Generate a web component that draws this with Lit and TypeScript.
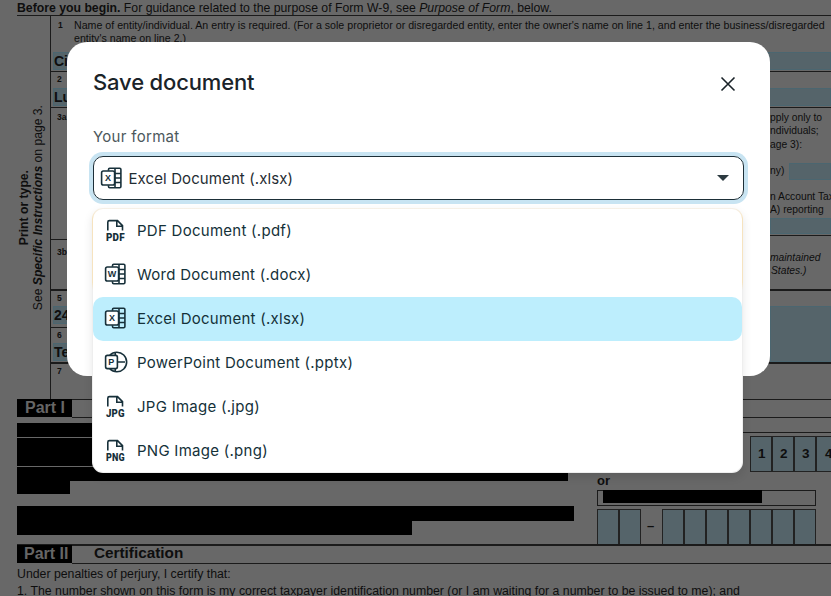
import { LitElement, html, css, svg } from "lit";
import { customElement } from "lit/decorators.js";
import { styleMap } from "lit/directives/style-map.js";

type Box = [number, number, number, number];

const INK = "#17303a";

const sheetIcon = (letter: string) => svg`
  <path d="M9.500 4.800V3.500c0-.7.5-1.200 1.200-1.200h10c.7 0 1.200.5 1.200 1.200v17c0 .7-.5 1.200-1.200 1.200h-10c-.7 0-1.200-.5-1.200-1.200v-1.300M16 2.500v19M15.500 7.500h6.400M15.500 12h6.400M15.500 16.500h6.400" fill="none" stroke="${INK}" stroke-width="1.600"/>
  <rect x="2.600" y="5" width="13" height="14" rx="1.800" fill="#fff" stroke="${INK}" stroke-width="1.600"/>
  <text x="9.100" y="15.300" text-anchor="middle" font-family="Liberation Sans, sans-serif" font-size="9" font-weight="700" fill="${INK}">${letter}</text>`;

const pptIcon = svg`
  <path d="M6.800 5.200A9.800 9.800 0 1 1 6.800 18.800M12.300 2.300v19.400M12.300 12h9.700" fill="none" stroke="${INK}" stroke-width="1.600"/>
  <rect x="2.600" y="5.400" width="11.800" height="13.200" rx="1.800" fill="#fff" stroke="${INK}" stroke-width="1.600"/>
  <text x="8.500" y="15.300" text-anchor="middle" font-family="Liberation Sans, sans-serif" font-size="9" font-weight="700" fill="${INK}">P</text>`;

const fileIcon = (label: string) => svg`
  <path d="M4.800 12.500V4.200c0-.9.700-1.600 1.600-1.600H14.500l5 5v4.900M13.800 2.600v5.700h5.700" fill="none" stroke="${INK}" stroke-width="1.600"/>
  <text x="12.400" y="22.800" text-anchor="middle" textLength="19" lengthAdjust="spacingAndGlyphs" font-family="Roboto, sans-serif" font-size="10.500" font-weight="900" fill="${INK}">${label}</text>`;

const icon = (g: unknown) => html`<svg class="ico" viewBox="0 0 24 24" aria-hidden="true">${g}</svg>`;

const OPTIONS = [
  { label: "PDF Document (.pdf)", g: fileIcon("PDF") },
  { label: "Word Document (.docx)", g: sheetIcon("W") },
  { label: "Excel Document (.xlsx)", g: sheetIcon("X"), active: true },
  { label: "PowerPoint Document (.pptx)", g: pptIcon },
  { label: "JPG Image (.jpg)", g: fileIcon("JPG") },
  { label: "PNG Image (.png)", g: fileIcon("PNG") },
];

// The scanned form behind the dialog: a free canvas of lines, fields and words.
const LINES: Box[] = [
  [17, 15, 814, 1], [50, 16, 1, 383], [50, 71, 781, 1], [50, 107, 781, 1], [50, 239, 20, 1], [770, 235, 61, 1],
  [50, 289, 781, 2], [50, 327, 20, 1], [50, 362, 781, 2], [72, 399, 759, 1], [72, 417, 759, 1],
  [17, 544, 814, 2], [72, 563, 759, 1], [597, 432, 234, 1], [597, 490, 219, 1], [597, 505, 219, 1],
  [597, 490, 1, 15], [815, 490, 1, 15],
];
const FIELDS: Box[] = [
  [53, 52, 778, 18], [53, 88, 778, 18], [789, 163, 42, 17], [770, 218, 61, 16], [53, 306, 20, 18],
  [770, 306, 61, 56], [53, 343, 20, 18],
];
const CELLS: Box[] = [
  [750, 436, 22, 36], [772, 436, 22, 36], [794, 436, 22, 36], [816, 436, 22, 36],
  [597, 509, 22, 36], [619, 509, 22, 36],
  [662, 509, 22, 36], [684, 509, 22, 36], [706, 509, 22, 36], [728, 509, 22, 36],
  [750, 509, 22, 36], [772, 509, 22, 36], [794, 509, 22, 36],
];
const BLACK: Box[] = [
  [17, 399, 55, 18], [17, 423, 551, 14], [17, 438, 551, 28], [17, 467, 551, 14], [17, 481, 53, 13],
  [17, 506, 557, 15], [17, 521, 395, 14], [603, 490, 159, 13], [17, 545, 55, 18], [560, 472, 8, 9], [560, 506, 14, 15],
];
type Word = { x: number; y: number; t: unknown; s?: number; cls?: string };
const WORDS: Word[] = [
  { x: 17, y: 1, s: 12.25, t: html`<b>Before you begin.</b> For guidance related to the purpose of Form W-9, see <i>Purpose of Form</i>, below.` },
  { x: 58, y: 20, s: 8.500, cls: "b", t: "1" },
  { x: 74, y: 19, s: 10.65, t: "Name of entity/individual. An entry is required. (For a sole proprietor or disregarded entity, enter the owner's name on line 1, and enter the business/disregarded" },
  { x: 74, y: 32, s: 10.65, t: "entity's name on line 2.)" },
  { x: 54, y: 53, s: 14, cls: "b", t: "Ci" },
  { x: 57, y: 74, s: 8.500, cls: "b", t: "2" },
  { x: 54, y: 89, s: 14, cls: "b", t: "Lu" },
  { x: 57, y: 112, s: 8.500, cls: "b", t: "3a" },
  { x: 57, y: 247, s: 8.500, cls: "b", t: "3b" },
  { x: 57, y: 293, s: 8.500, cls: "b", t: "5" },
  { x: 54, y: 307, s: 14, cls: "b", t: "24" },
  { x: 57, y: 330, s: 8.500, cls: "b", t: "6" },
  { x: 54, y: 344, s: 14, cls: "b", t: "Te" },
  { x: 57, y: 366, s: 8.500, cls: "b", t: "7" },
  { x: 770, y: 112, s: 10.3, t: "pply only to" },
  { x: 770, y: 125, s: 10.3, t: "ndividuals;" },
  { x: 770, y: 139, s: 10.3, t: "age 3):" },
  { x: 770, y: 165, s: 10.3, t: "ny)" },
  { x: 770, y: 191, s: 10.3, t: "n Account Tax" },
  { x: 770, y: 204, s: 10.3, t: "A) reporting" },
  { x: 770, y: 252, s: 10.3, cls: "i", t: "maintained" },
  { x: 771, y: 265, s: 10.3, cls: "i", t: "States.)" },
  { x: 25, y: 398, s: 16, cls: "part", t: "Part I" },
  { x: 24, y: 544, s: 16, cls: "part", t: "Part II" },
  { x: 94, y: 544, s: 15.3, cls: "b", t: "Certification" },
  { x: 597, y: 473, s: 13, cls: "b", t: "or" },
  { x: 647, y: 518, s: 13, cls: "b", t: "–" },
  { x: 758, y: 446, s: 13.5, cls: "b", t: "1" },
  { x: 780, y: 446, s: 13.5, cls: "b", t: "2" },
  { x: 802, y: 446, s: 13.5, cls: "b", t: "3" },
  { x: 825, y: 446, s: 13.5, cls: "b", t: "4" },
  { x: 17, y: 567, s: 12.3, t: "Under penalties of perjury, I certify that:" },
  { x: 17, y: 584, s: 12.3, t: "1. The number shown on this form is my correct taxpayer identification number (or I am waiting for a number to be issued to me); and" },
];

const boxStyle = ([left, top, width, height]: Box) =>
  styleMap({ left: `${left}px`, top: `${top}px`, width: `${width}px`, height: `${height}px` });

@customElement("app-root")
export class AppRoot extends LitElement {
  static styles = css`
    :host { display: block; width: 831px; height: 596px; position: relative; overflow: hidden;
      background: #686868; font-family: "Inter", sans-serif; }
    .form { position: absolute; inset: 0; font-family: "Liberation Sans", sans-serif; color: #0e0e0e; }
    .form > * { position: absolute; }
    .line { background: #1b1b1b; }
    .field { background: #55646a; box-shadow: inset 0 0 0 1px #4b6670; }
    .cell { background: #55646a; box-shadow: inset 0 0 0 1px #4b6670; outline: 1px solid #222; outline-offset: -1px; }
    .black { background: #000; }
    .word { white-space: nowrap; line-height: 1.2; }
    .word.b { font-weight: 700; }
    .word.i { font-style: italic; }
    .word.part { font-weight: 700; color: #666; }
    .side { writing-mode: vertical-rl; transform: rotate(180deg); white-space: nowrap; line-height: 1; }
    .side.one { left: 18px; top: 170px; font-size: 12.2px; font-weight: 700; }
    .side.two { left: 32px; top: 105px; font-size: 12.15px; }

    .dialog { position: absolute; left: 67px; top: 42px; width: 703px; height: 334px; box-sizing: border-box;
      background: #fff; border-radius: 20px; padding: 26px 26px 0; }
    .head { display: flex; align-items: center; justify-content: space-between; padding-right: 4.500px; }
    h2 { margin: 0; font-size: 22px; line-height: 28px; font-weight: 500; color: #1a2329; letter-spacing: -.15px; }
    .close { display: flex; background: none; border: 0; padding: 0; margin-top: 3px; color: #1a2329; }
    .close svg { width: 24px; height: 24px; }
    label { display: block; margin-top: 30px; font-size: 15px; letter-spacing: .3px; line-height: 22px; color: #4c585c; }
    .select { display: flex; align-items: center; gap: 5.500px; margin-top: 8px; height: 44px; width: 651px; box-sizing: border-box;
      padding: 0 14px 0 5px; border: 1.500px solid #1d2f38; border-radius: 10px; box-shadow: 0 0 0 4px #c8e4f2;
      font-size: 15px; letter-spacing: .1px; color: #1f2d33; }
    .select span { flex: 1; }
    .caret { width: 0; height: 0; border: 6px solid transparent; border-top: 6.500px solid #2c3a40; border-bottom: 0; }
    .ico { width: 24px; height: 24px; flex: none; overflow: visible; }
    .menu { position: absolute; left: 92px; top: 208px; width: 651px; height: 265px; box-sizing: border-box; padding: 1px;
      border-radius: 11px; background: linear-gradient(#f5f0e8 0, #f6e3bf 4%, #f6e3bf 28%, #eeeeee 31%, #eeeeee 100%);
      box-shadow: 0 4px 10px rgba(0,0,0,.1); }
    .list { height: 100%; background: #fff; border-radius: 10px; }
    .opt { display: flex; align-items: center; gap: 10px; height: 44px; box-sizing: border-box; padding: 0 0 2px 10px;
      border-radius: 10px; font-size: 15px; letter-spacing: .27px; color: #143139; }
    .opt.active { background: #bdeefd; }
  `;

  render() {
    return html`
      <div class="form">
        ${FIELDS.map((b) => html`<div class="field" style=${boxStyle(b)}></div>`)}
        ${CELLS.map((b) => html`<div class="cell" style=${boxStyle(b)}></div>`)}
        ${LINES.map((b) => html`<div class="line" style=${boxStyle(b)}></div>`)}
        ${BLACK.map((b) => html`<div class="black" style=${boxStyle(b)}></div>`)}
        ${WORDS.map((w) => html`<div class="word ${w.cls ?? ""}" style=${styleMap({ left: `${w.x}px`, top: `${w.y}px`, fontSize: `${w.s}px` })}>${w.t}</div>`)}
        <div class="side one">Print or type.</div>
        <div class="side two">See <b><i>Specific Instructions</i></b> on page 3.</div>
      </div>
      <section class="dialog">
        <div class="head">
          <h2>Save document</h2>
          <button class="close" aria-label="Close">
            <svg viewBox="0 0 24 24"><path d="M5.500 5.500l13 13M18.500 5.500l-13 13" fill="none" stroke="currentColor" stroke-width="1.600"/></svg>
          </button>
        </div>
        <label>Your format</label>
        <div class="select">
          ${icon(sheetIcon("X"))}
          <span>Excel Document (.xlsx)</span>
          <div class="caret"></div>
        </div>
      </section>
      <div class="menu">
        <div class="list">
          ${OPTIONS.map((o) => html`<div class="opt ${o.active ? "active" : ""}">${icon(o.g)}<span>${o.label}</span></div>`)}
        </div>
      </div>
    `;
  }
}
